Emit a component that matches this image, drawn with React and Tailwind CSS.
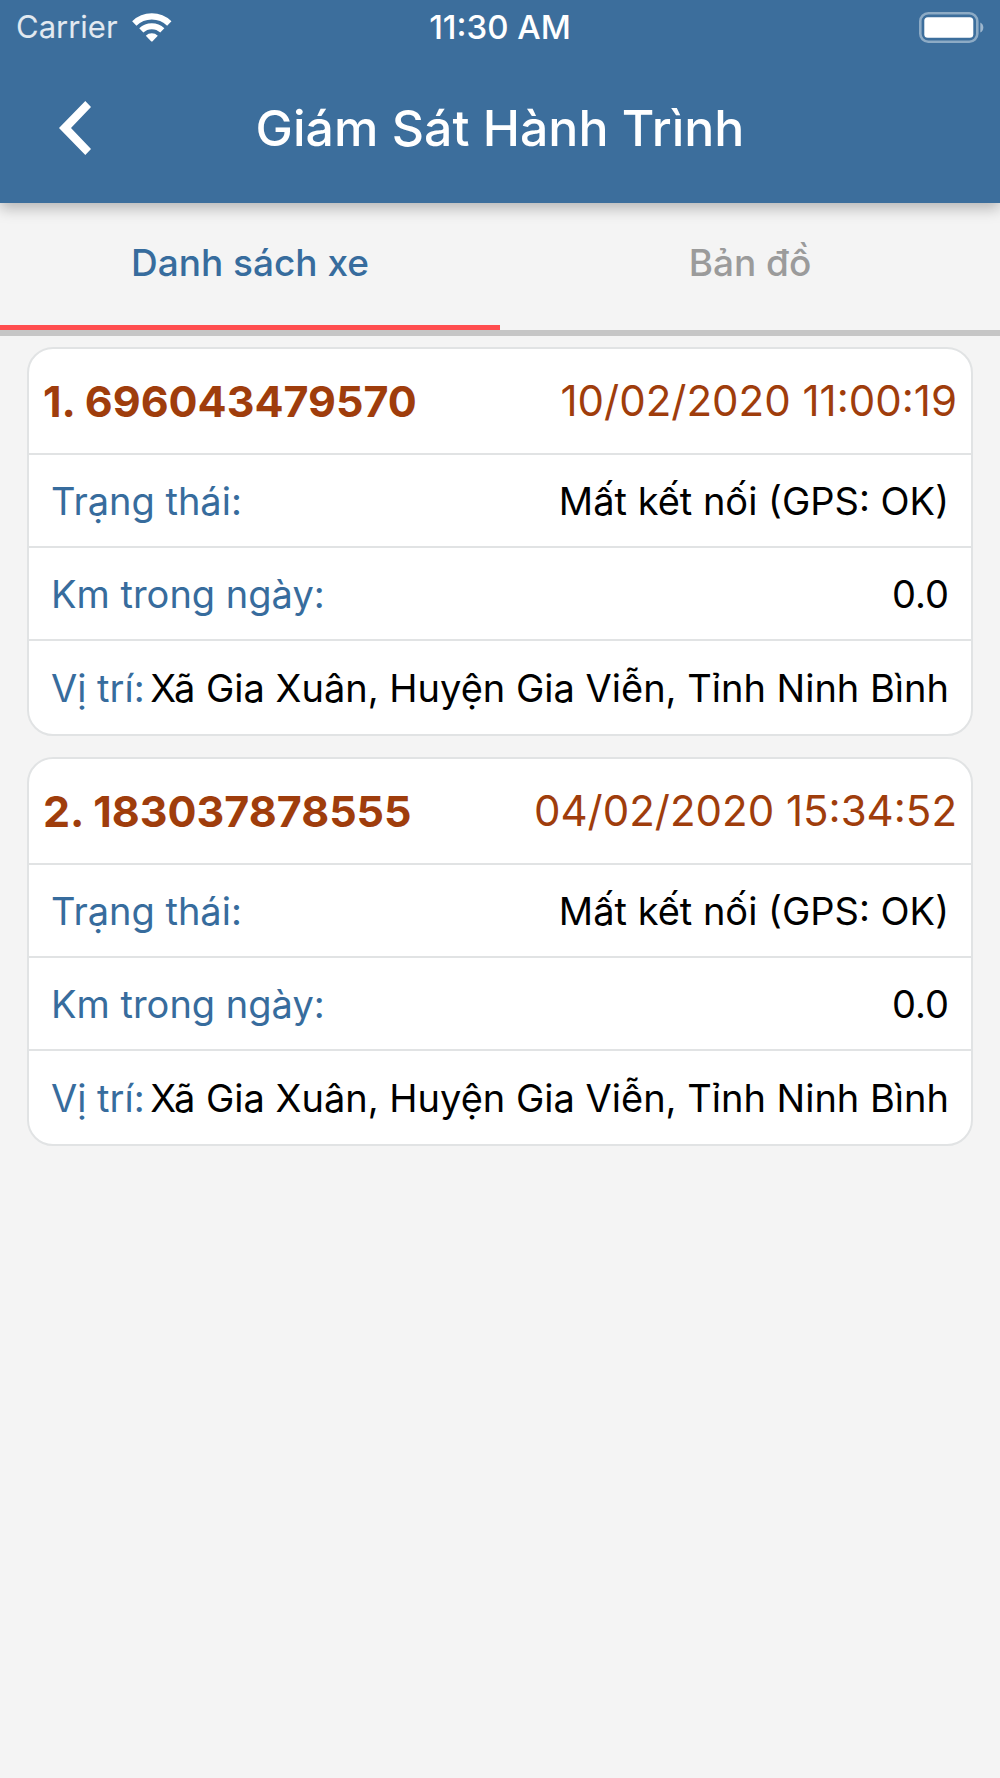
import clsx from "clsx"

const vehicles = [
  {
    id: 1,
    plate: "696043479570",
    time: "10/02/2020 11:00:19",
    status: "Mất kết nối (GPS: OK)",
    km: "0.0",
    location: "Xã Gia Xuân, Huyện Gia Viễn, Tỉnh Ninh Bình",
  },
  {
    id: 2,
    plate: "183037878555",
    time: "04/02/2020 15:34:52",
    status: "Mất kết nối (GPS: OK)",
    km: "0.0",
    location: "Xã Gia Xuân, Huyện Gia Viễn, Tỉnh Ninh Bình",
  },
]

const tabs = [
  { id: "list", label: "Danh sách xe", active: true },
  { id: "map", label: "Bản đồ", active: false },
]

function WifiIcon() {
  return (
    <svg className="w-10 h-[29px]" viewBox="0 0 40 29" fill="none" stroke="currentColor" aria-hidden="true">
      <path d="M2.3 10.4 A25.2 25.2 0 0 1 37.3 10.4" strokeWidth="6.2" />
      <path d="M9.3 17.4 A15.3 15.3 0 0 1 30.3 17.4" strokeWidth="6" />
      <path d="M13.8 22.7 A8.5 8.5 0 0 1 25.8 22.7 L20.8 28 Q19.8 29 18.8 28 Z" fill="currentColor" stroke="none" />
    </svg>
  )
}

function BatteryIcon() {
  return (
    <svg className="w-[65px] h-[31px]" viewBox="0 0 65 31" aria-hidden="true">
      <rect x="1.3" y="1.3" width="57" height="28.4" rx="8" fill="none" stroke="#fff" strokeOpacity="0.42" strokeWidth="2.6" />
      <rect x="5.3" y="5.2" width="49" height="20.6" rx="3.5" fill="#fff" />
      <path d="M61.3 10.5 Q64.3 12 64.3 15.5 Q64.3 19 61.3 20.5 Z" fill="#fff" fillOpacity="0.5" />
    </svg>
  )
}

function StatusBar() {
  return (
    <div className="grid grid-cols-3 items-center h-14 px-4 pb-0.5">
      <div className="flex items-center gap-[14px] text-white/85">
        <span className="text-[31px] leading-10">Carrier</span>
        <span className="text-white">
          <WifiIcon />
        </span>
      </div>
      <span className="text-center text-[33px] leading-10 font-medium">11:30 AM</span>
      <div className="flex justify-end">
        <BatteryIcon />
      </div>
    </div>
  )
}

function VehicleCard({ vehicle }) {
  return (
    <article className="rounded-[26px] border-2 border-[#e1e3e4] bg-white text-[38px] leading-[48px]">
      <header className="flex items-center justify-between h-[106px] px-[14px] border-b-2 border-[#e1e3e4] text-[#9f3d0c]">
        <h2 className="text-[43px] font-bold">{vehicle.id}. {vehicle.plate}</h2>
        <time className="text-[42px]">{vehicle.time}</time>
      </header>
      <dl className="divide-y-2 divide-[#e1e3e4]">
        <div className="flex items-center justify-between h-[93px] px-[22px]">
          <dt className="text-[#376c9d]">Trạng thái:</dt>
          <dd>{vehicle.status}</dd>
        </div>
        <div className="flex items-center justify-between h-[93px] px-[22px]">
          <dt className="text-[#376c9d]">Km trong ngày:</dt>
          <dd>{vehicle.km}</dd>
        </div>
        <div className="flex items-center justify-between h-[93px] px-[22px] whitespace-nowrap">
          <dt className="text-[#376c9d]">Vị trí:</dt>
          <dd>{vehicle.location}</dd>
        </div>
      </dl>
    </article>
  )
}

export default function App() {
  return (
    <div className="min-h-screen bg-[#f4f4f4] text-black font-['Inter',sans-serif]">
      <div className="relative bg-[#3c6e9c] text-white shadow-[0_5px_14px_rgba(0,0,0,0.27)]">
        <StatusBar />
        <div className="grid grid-cols-[150px_1fr_150px] items-center h-[147px] pb-1">
          <button type="button" aria-label="Quay lại" className="flex justify-center">
            <svg className="w-8 h-[54px]" viewBox="0 0 32 54" fill="currentColor" aria-hidden="true">
              <path d="M26.3 0 L32 6 L12 27 L32 48 L26.3 54 L0 27 Z" />
            </svg>
          </button>
          <h1 className="text-center text-[50px] leading-[64px] font-medium">Giám Sát Hành Trình</h1>
        </div>
      </div>

      <div role="tablist" className="grid grid-cols-2 border-b-[6px] border-[#c6c6c6]">
        {tabs.map(tab => (
          <button
            key={tab.id}
            type="button"
            role="tab"
            aria-selected={tab.active}
            className={clsx(
              "h-[127px] border-b-[5px] pb-0.5 text-[37px] leading-[48px] font-medium",
              tab.active ? "border-[#ff4d4f] text-[#376c9d]" : "border-transparent text-[#9b9b9b]"
            )}
          >
            {tab.label}
          </button>
        ))}
      </div>

      <main className="flex flex-col gap-[21px] px-[27px] pt-[11px]">
        {vehicles.map(vehicle => (
          <VehicleCard key={vehicle.id} vehicle={vehicle} />
        ))}
      </main>
    </div>
  )
}
